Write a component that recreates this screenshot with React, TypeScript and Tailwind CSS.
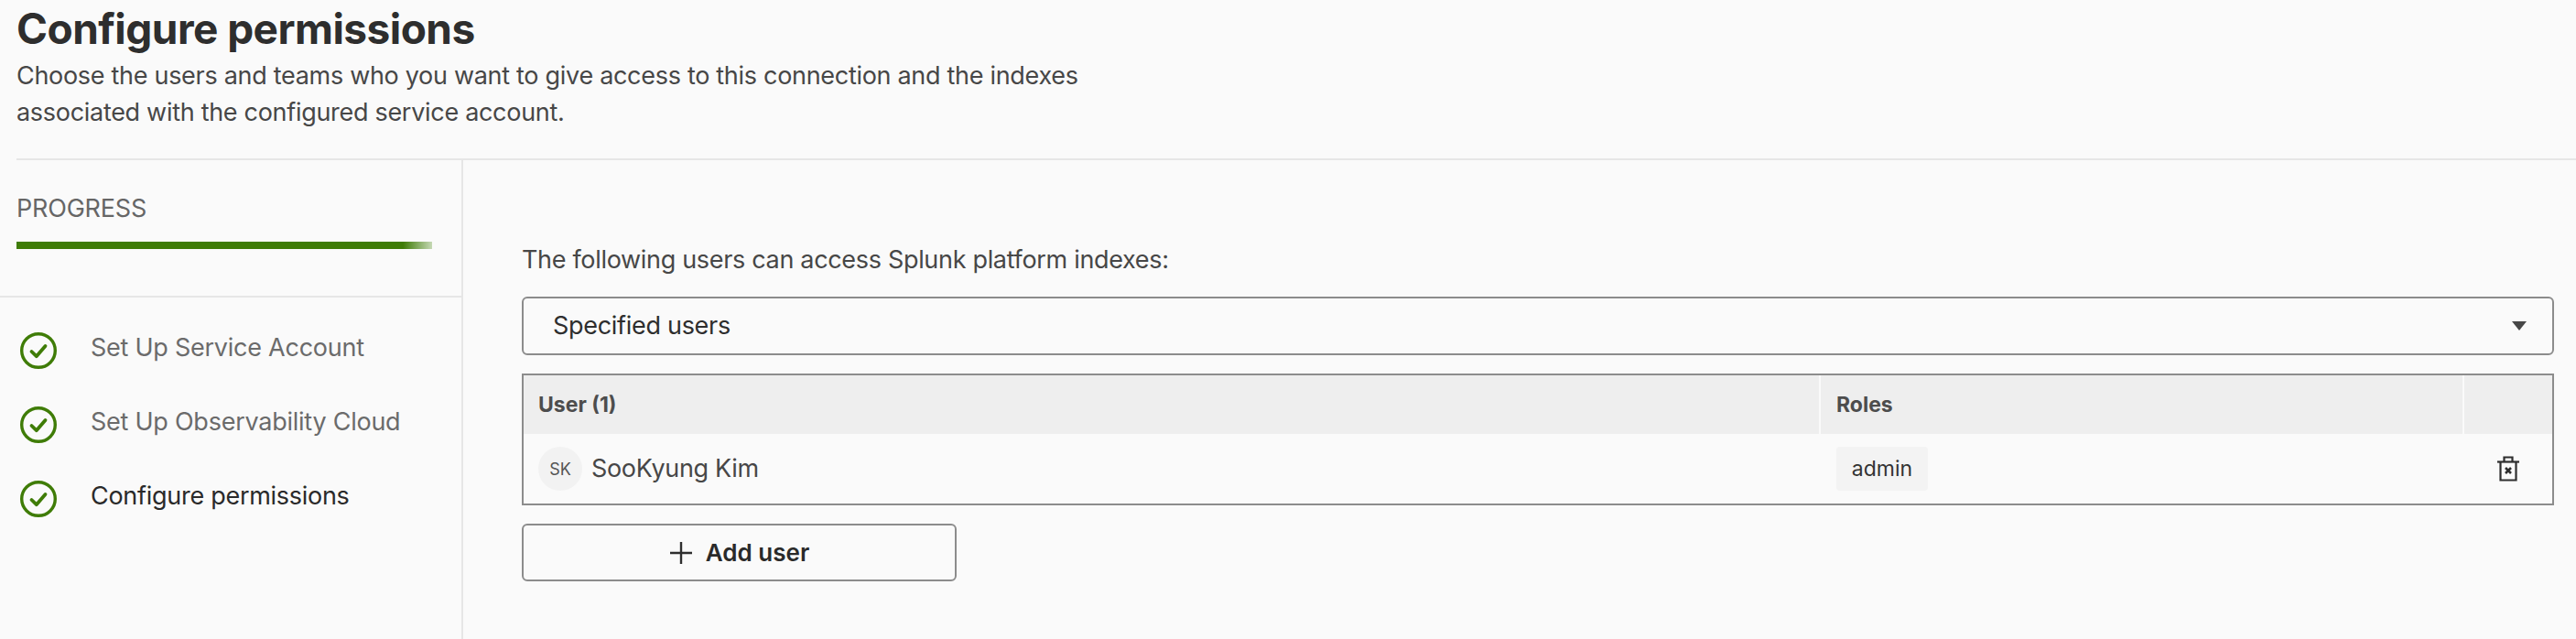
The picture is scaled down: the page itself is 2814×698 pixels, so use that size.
import React from "react";

const Check = () => (
  <svg width="40" height="40" viewBox="0 0 40 40" fill="none" className="shrink-0">
    <circle cx="20" cy="20" r="18.3" stroke="#3f7c07" strokeWidth="3.4" />
    <path d="M12.5 21 L17.8 26.2 L27.5 15" stroke="#3f7c07" strokeWidth="3.8" strokeLinecap="round" strokeLinejoin="round" />
  </svg>
);

const Trash = () => (
  <svg width="24" height="28" viewBox="0 0 24 28" fill="none" stroke="#2e2e2e" strokeWidth="2.2">
    <path d="M0 6.5H24" />
    <path d="M3.5 6.5V26.5H20.5V6.5" />
    <path d="M7.5 6.5V1.5H16.5V6.5" />
    <path d="M9 13L15 19M15 13L9 19" strokeWidth="2.6" />
  </svg>
);

const Step = ({ label, active }: { label: string; active?: boolean }) => (
  <div className="flex h-[40px] items-center gap-[37px] pl-[22px]">
    <Check />
    <span className={active ? "relative -top-[3px] text-[27px] tracking-[-0.28px] text-[#2a2a2a]" : "relative -top-[3px] text-[27px] tracking-[-0.25px] text-[#6b6b6b]"}>{label}</span>
  </div>
);

export default function App() {
  return (
    <div className="flex h-[698px] w-[2814px] flex-col overflow-hidden bg-[#fafafa] font-['Inter','Liberation_Sans',sans-serif]">
      <header className="ml-[18px] h-[175px] shrink-0 border-b-2 border-[#e6e6e6]">
        <h1 className="pt-[3px] text-[46px] leading-[56px] font-bold tracking-[-0.55px] text-[#2e2e2e]">Configure permissions</h1>
        <p className="mt-[4px] w-[1250px] text-[27px] leading-[40px] tracking-[-0.3px] text-[#474747]">
          Choose the users and teams who you want to give access to this connection and the indexes
          <br />
          associated with the configured service account.
        </p>
      </header>
      <div className="flex min-h-0 flex-1">
        <aside className="w-[506px] shrink-0 border-r-2 border-[#e6e6e6]">
          <div className="h-[150px] border-b-2 border-[#e6e6e6] pl-[18px] pt-[37px]">
            <div className="text-[27px] leading-[32px] tracking-[-0.2px] text-[#666666]">PROGRESS</div>
            <div className="mt-[20px] h-[8px] w-[454px] bg-[linear-gradient(to_right,#3f7c07_93%,#c5d8b4_100%)]" />
          </div>
          <div className="flex flex-col gap-[41px] pt-[38px]">
            <Step label="Set Up Service Account" />
            <Step label="Set Up Observability Cloud" />
            <Step label="Configure permissions" active />
          </div>
        </aside>
        <main className="w-[2284px] shrink-0 pl-[64px] pt-[91px]">
          <p className="text-[27px] leading-[36px] tracking-[-0.32px] text-[#474747]">The following users can access Splunk platform indexes:</p>
          <div className="mt-[22px] flex h-[64px] items-center justify-between rounded-[6px] border-2 border-[#8c8c8c] pl-[32px] pr-[28px] text-[27px] tracking-[-0.3px] text-[#2e2e2e]">
            <span>Specified users</span>
            <svg width="16" height="10" viewBox="0 0 16 10">
              <path d="M0 0H16L8 10Z" fill="#474747" />
            </svg>
          </div>
          <div className="mt-[20px] border-2 border-[#8c8c8c]">
            <div className="flex h-[64px] bg-[#eeeeee] text-[23px] font-bold text-[#4d4d4d]">
              <div className="flex w-[1417px] shrink-0 items-center border-r-2 border-[#fafafa] pl-[16px]">User (1)</div>
              <div className="flex w-[703px] shrink-0 items-center border-r-2 border-[#fafafa] pl-[17px]">Roles</div>
              <div className="flex-1" />
            </div>
            <div className="flex h-[76px] items-center">
              <div className="flex w-[1417px] shrink-0 items-center gap-[10px] pl-[16px]">
                <div className="flex h-[48px] w-[48px] items-center justify-center rounded-full bg-[#f2f2f2] text-[18px] text-[#555555]">SK</div>
                <span className="text-[27px] tracking-[-0.33px] text-[#474747]">SooKyung Kim</span>
              </div>
              <div className="w-[739px] shrink-0 pl-[17px]">
                <span className="flex h-[48px] w-[100px] items-center justify-center rounded-[4px] bg-[#f3f3f3] text-[23px] text-[#333333]">admin</span>
              </div>
              <Trash />
            </div>
          </div>
          <button className="mt-[20px] flex h-[63px] w-[475px] items-center justify-center gap-[14px] rounded-[6px] border-2 border-[#8c8c8c] text-[26px] font-semibold text-[#2a2a2a]">
            <svg width="26" height="26" viewBox="0 0 26 26" stroke="#2e2e2e" strokeWidth="2.4">
              <path d="M13 1V25M1 13H25" />
            </svg>
            <span>Add user</span>
          </button>
        </main>
      </div>
    </div>
  );
}
